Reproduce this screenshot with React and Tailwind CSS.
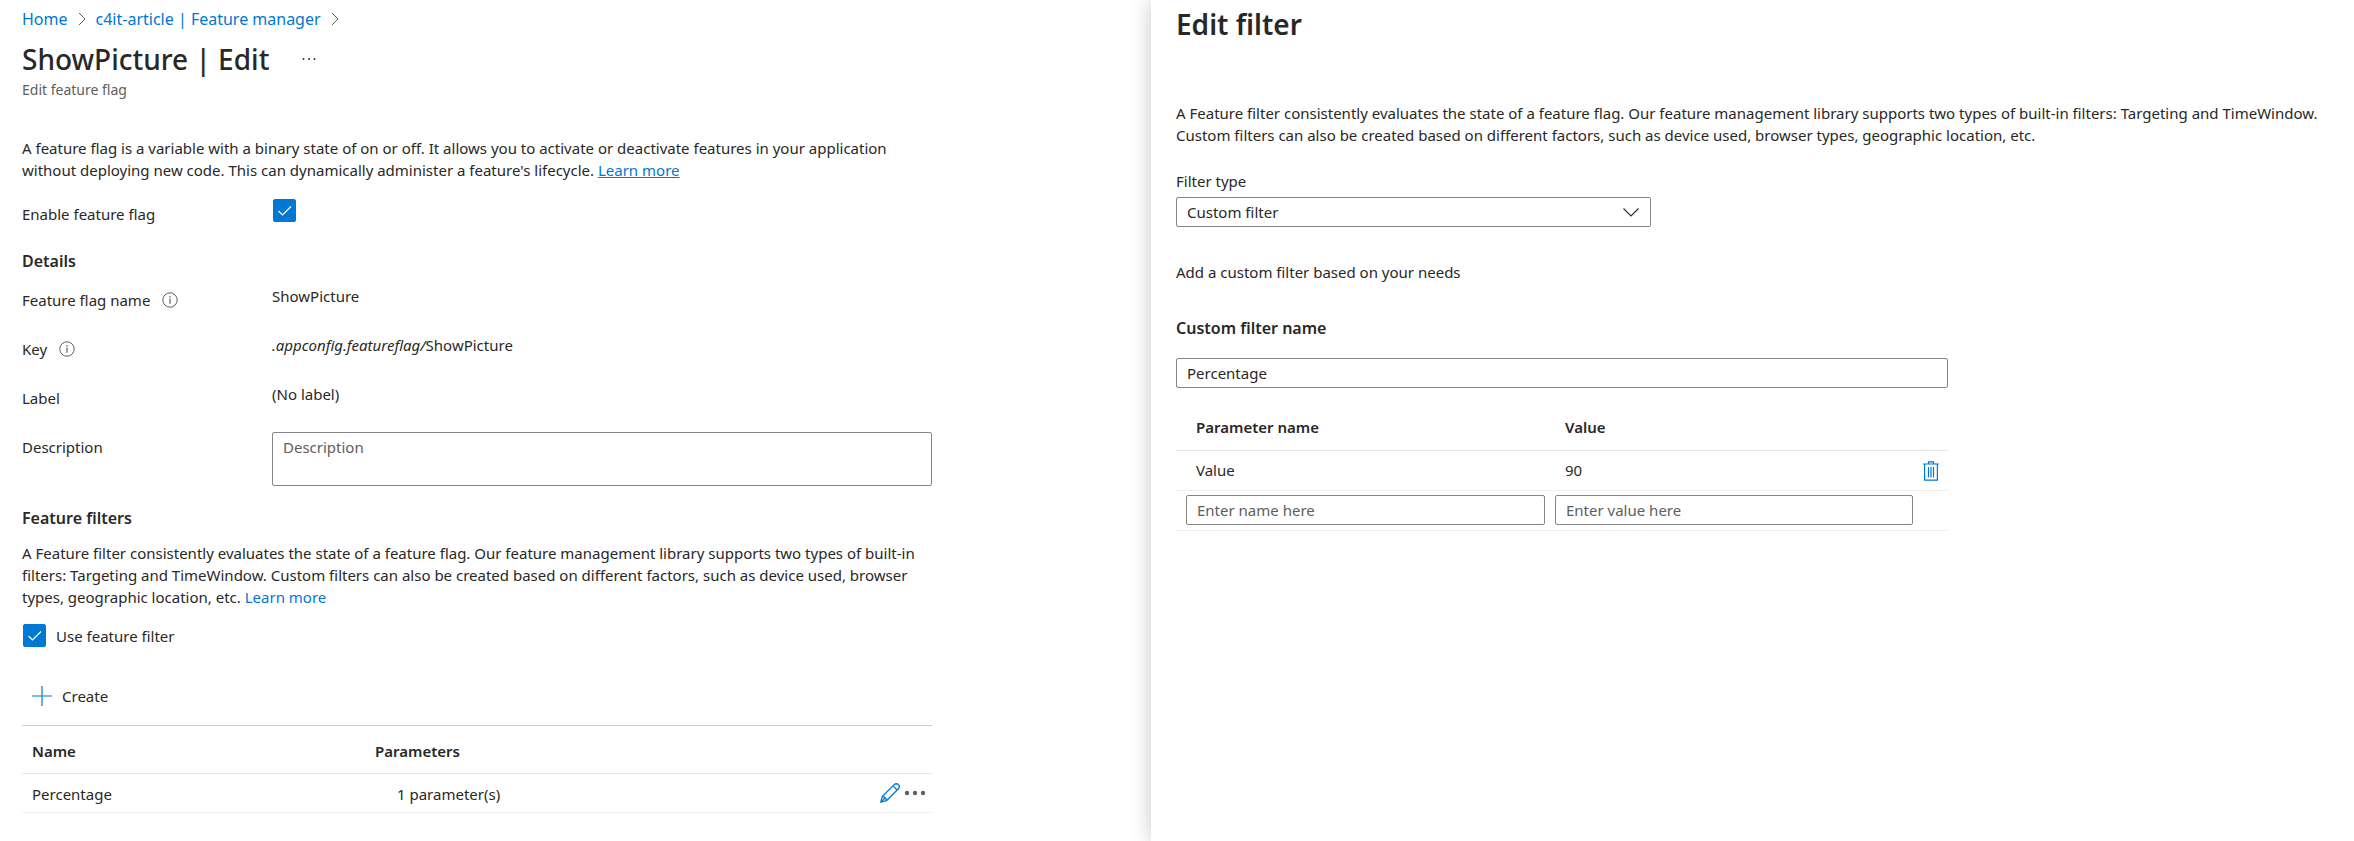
import React from "react";

function CrumbChevron() {
  return (
    <svg viewBox="0 0 8 14" className="h-[14px] w-2" fill="none" stroke="#605e5c" strokeWidth="1" aria-hidden="true">
      <path d="M1 1l6 6-6 6" />
    </svg>
  );
}

function InfoIcon() {
  return (
    <svg viewBox="0 0 16 16" className="size-4" fill="none" stroke="#605e5c" strokeWidth="1" aria-hidden="true">
      <circle cx="8" cy="8" r="7.2" />
      <path d="M8 6.6v5.2" strokeWidth="1.2" />
      <path d="M8 4.1v1.3" strokeWidth="1.2" />
    </svg>
  );
}

function PencilIcon() {
  return (
    <svg viewBox="0 0 20 20" className="size-5" fill="none" stroke="#0078d4" strokeWidth="1.3" strokeLinejoin="round" aria-hidden="true">
      <path d="M.8 19.2l1.5-5.7L14.2 1.6a2.9 2.9 0 0 1 4.2 4.2L6.5 17.7z" />
      <path d="M13 2.9l4.1 4.1M2.3 13.5c2 .2 3.9 2 4.2 4.2M.8 19.2l4.5-4.5" />
    </svg>
  );
}

function TrashIcon() {
  return (
    <svg viewBox="0 0 16 20" className="h-5 w-4" fill="none" stroke="#0078d4" strokeWidth="1.2" aria-hidden="true">
      <path d="M0 3h16M5.5 3V.8h5V3M1.6 3v16.2h12.8V3" />
      <path d="M5.5 6v10.5M8 6v10.5M10.5 6v10.5" />
    </svg>
  );
}

function Checkbox({ id }) {
  return (
    <span className="grid size-[23px] shrink-0">
      <input
        id={id}
        type="checkbox"
        defaultChecked
        className="col-start-1 row-start-1 size-[23px] appearance-none rounded-[2px] border border-[#0078d4] bg-white checked:bg-[#0078d4]"
      />
      <svg viewBox="0 0 23 23" className="pointer-events-none col-start-1 row-start-1 size-[23px]" fill="none" stroke="#fff" strokeWidth="1.2" aria-hidden="true">
        <path d="M5.5 12l4 4L18 7.5" />
      </svg>
    </span>
  );
}

function Field({ label, info, htmlFor, children }) {
  return (
    <div className="flex min-h-[49px] items-start">
      <div className="flex w-[250px] shrink-0 items-center gap-3 pt-1">
        {htmlFor ? <label htmlFor={htmlFor}>{label}</label> : <span>{label}</span>}
        {info && (
          <button type="button" aria-label={"About " + label}>
            <InfoIcon />
          </button>
        )}
      </div>
      <div className="min-w-0 flex-1">{children}</div>
    </div>
  );
}

const box = "rounded-[2px] border border-[#868686] bg-white px-2.5 placeholder:text-[#605e5c] placeholder:opacity-100";

function EditFeature() {
  return (
    <main className="min-w-0 px-[22px] pt-2">
      <nav aria-label="Breadcrumb" className="flex items-center gap-2.5 text-base leading-[22px] text-[#0078d4]">
        <a href="#home">Home</a>
        <CrumbChevron />
        <a href="#manager">c4it-article | Feature manager</a>
        <CrumbChevron />
      </nav>
      <div className="mt-[11px] flex items-center gap-8">
        <h1 className="text-[28px] leading-9 font-medium">ShowPicture | Edit</h1>
        <button type="button" aria-label="More options">
          <svg viewBox="0 0 16 4" className="h-1 w-4" fill="#323130" aria-hidden="true">
            <circle cx="2.5" cy="2" r="1" />
            <circle cx="8" cy="2" r="1" />
            <circle cx="13.5" cy="2" r="1" />
          </svg>
        </button>
      </div>
      <p className="mt-[3px] text-sm leading-5 text-[#605e5c]">Edit feature flag</p>

      <div className="max-w-[910px]">
        <p className="mt-[37px]">
          A feature flag is a variable with a binary state of on or off. It allows you to activate or deactivate features in your application without deploying new code. This can dynamically administer a feature's lifecycle.{" "}
          <a href="#learn" className="text-[#0078d4] underline">Learn more</a>
        </p>

        <div className="mt-[18px] flex items-start">
          <label htmlFor="enable" className="w-[251px] shrink-0 pt-1">Enable feature flag</label>
          <Checkbox id="enable" />
        </div>

        <h2 className="mt-6 text-base leading-6 font-semibold">Details</h2>
        <div className="mt-3">
          <Field label="Feature flag name" info>ShowPicture</Field>
          <Field label="Key" info><i>.appconfig.featureflag/</i>ShowPicture</Field>
          <Field label="Label">(No label)</Field>
          <Field label="Description" htmlFor="description">
            <textarea id="description" placeholder="Description" className={box + " block h-[54px] w-full resize-none py-[3px]"} />
          </Field>
        </div>

        <h2 className="mt-5 text-base leading-6 font-semibold">Feature filters</h2>
        <p className="mt-3">
          A Feature filter consistently evaluates the state of a feature flag. Our feature management library supports two types of built-in filters: Targeting and TimeWindow. Custom filters can also be created based on different factors, such as device used, browser types, geographic location, etc.{" "}
          <a href="#learn-filters" className="text-[#0078d4]">Learn more</a>
        </p>
        <div className="mt-4 flex items-center gap-2.5 pl-px">
          <Checkbox id="use-filter" />
          <label htmlFor="use-filter">Use feature filter</label>
        </div>

        <div className="mt-[38px] border-b border-[#cccccc] px-2.5 pb-[18px]">
          <button type="button" className="flex items-center gap-2.5">
            <svg viewBox="0 0 20 20" className="size-5" stroke="#0078d4" strokeWidth="1.2" aria-hidden="true">
              <path d="M10 0v20M0 10h20" />
            </svg>
            Create
          </button>
        </div>
        <table className="w-full table-fixed text-left">
          <thead>
            <tr className="border-b border-[#e5e5e5]">
              <th className="w-[343px] pt-[14px] pb-[11px] pl-2.5 font-semibold">Name</th>
              <th className="pt-[14px] pb-[11px] pl-2.5 font-semibold">Parameters</th>
              <th className="w-[60px]" aria-label="Actions" />
            </tr>
          </thead>
          <tbody>
            <tr className="border-b border-[#f0f0f0]">
              <td className="pt-[9px] pb-[7px] pl-2.5">Percentage</td>
              <td className="pt-[9px] pb-[7px] pl-8">1 parameter(s)</td>
              <td className="p-0">
                <div className="flex items-center justify-end gap-1 pr-1.5">
                  <button type="button" aria-label="Edit filter"><PencilIcon /></button>
                  <button type="button" aria-label="More actions">
                    <svg viewBox="0 0 22 20" className="h-5 w-[22px]" fill="#605e5c" aria-hidden="true">
                      <circle cx="3" cy="10" r="2.2" />
                      <circle cx="11" cy="10" r="2.2" />
                      <circle cx="19" cy="10" r="2.2" />
                    </svg>
                  </button>
                </div>
              </td>
            </tr>
          </tbody>
        </table>
      </div>
    </main>
  );
}

function FilterPanel() {
  return (
    <aside className="min-w-0 bg-white pt-1.5 pr-4 pl-[25px] shadow-[0_0_20px_rgba(0,0,0,0.22)]">
      <h1 className="text-[28px] leading-9 font-semibold">Edit filter</h1>
      <p className="mt-[60px]">
        A Feature filter consistently evaluates the state of a feature flag. Our feature management library supports two types of built-in filters: Targeting and TimeWindow. Custom filters can also be created based on different factors, such as device used, browser types, geographic location, etc.
      </p>
      <label htmlFor="filter-type" className="mt-6 block">Filter type</label>
      <div className="mt-[5px] grid max-w-[475px] items-center">
        <select id="filter-type" className={box + " col-start-1 row-start-1 h-[30px] w-full appearance-none"}>
          <option>Custom filter</option>
        </select>
        <svg viewBox="0 0 16 9" className="pointer-events-none col-start-1 row-start-1 mr-3 h-[9px] w-4 justify-self-end" fill="none" stroke="#323130" strokeWidth="1.2" aria-hidden="true">
          <path d="M.5 .5L8 8l7.5-7.5" />
        </svg>
      </div>
      <p className="mt-[34px]">Add a custom filter based on your needs</p>

      <div className="max-w-[772px]">
        <label htmlFor="filter-name" className="mt-[33px] block text-base leading-6 font-semibold">Custom filter name</label>
        <input id="filter-name" type="text" defaultValue="Percentage" className={box + " mt-[18px] block h-[30px] w-full"} />
        <table className="mt-3 w-full table-fixed text-left">
          <thead>
            <tr className="border-b border-[#e5e5e5]">
              <th className="w-[374px] pt-4 pb-3 pl-5 font-semibold">Parameter name</th>
              <th className="pt-4 pb-3 pl-[15px] font-semibold">Value</th>
              <th className="w-[30px]" aria-label="Actions" />
            </tr>
          </thead>
          <tbody>
            <tr className="border-b border-[#f0f0f0]">
              <td className="pt-2 pb-[9px] pl-5">Value</td>
              <td className="pt-2 pb-[9px] pl-[15px]">90</td>
              <td className="p-0 pl-[5px]">
                <button type="button" aria-label="Delete parameter" className="block"><TrashIcon /></button>
              </td>
            </tr>
            <tr className="border-b border-[#f0f0f0]">
              <td className="pt-1 pr-[5px] pb-[5px] pl-2.5">
                <input type="text" aria-label="Parameter name" placeholder="Enter name here" className={box + " block h-[30px] w-full"} />
              </td>
              <td className="px-[5px] pt-1 pb-[5px]">
                <input type="text" aria-label="Parameter value" placeholder="Enter value here" className={box + " block h-[30px] w-full"} />
              </td>
              <td />
            </tr>
          </tbody>
        </table>
      </div>
    </aside>
  );
}

export default function App() {
  return (
    <div className="grid min-h-screen grid-cols-[1151fr_1203fr] overflow-x-hidden bg-white font-['Noto_Sans','Open_Sans',sans-serif] text-[15px] leading-[22px] text-[#292827]">
      <EditFeature />
      <FilterPanel />
    </div>
  );
}
